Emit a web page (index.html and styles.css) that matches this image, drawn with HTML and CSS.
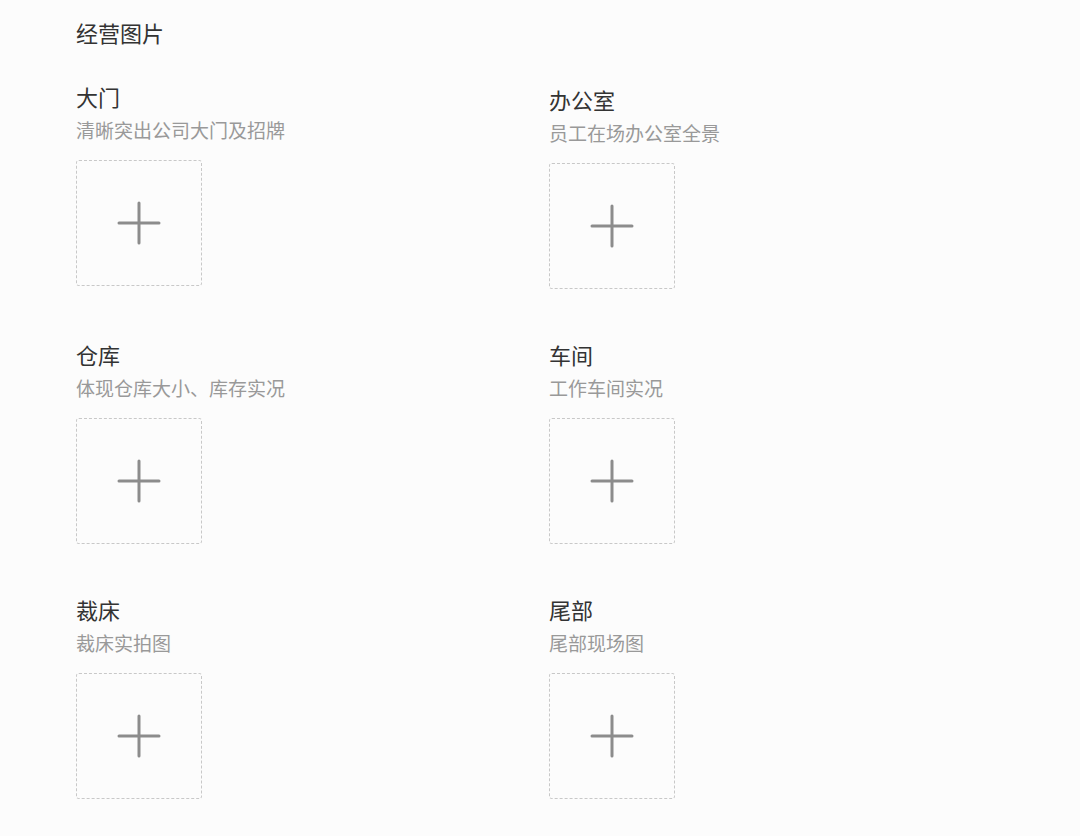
FILE: index.html
```html
<!DOCTYPE html>
<html>

<head>
  <title>经营图片</title>
  <link rel="stylesheet" href="styles.css">
</head>

<body>
  <div class="container">
    <h1>经营图片</h1>

    <div class="photo-grid">
      <div class="photo-item">
        <div class="photo-name">大门</div>
        <div class="photo-desc">清晰突出公司大门及招牌</div>
        <div class="upload-box">
          <svg width="44" height="44" viewBox="0 0 44 44"><path d="M22 2v40M2 22h40" /></svg>
        </div>
      </div>

      <div class="photo-item shifted">
        <div class="photo-name">办公室</div>
        <div class="photo-desc">员工在场办公室全景</div>
        <div class="upload-box">
          <svg width="44" height="44" viewBox="0 0 44 44"><path d="M22 2v40M2 22h40" /></svg>
        </div>
      </div>

      <div class="photo-item">
        <div class="photo-name">仓库</div>
        <div class="photo-desc">体现仓库大小、库存实况</div>
        <div class="upload-box">
          <svg width="44" height="44" viewBox="0 0 44 44"><path d="M22 2v40M2 22h40" /></svg>
        </div>
      </div>

      <div class="photo-item">
        <div class="photo-name">车间</div>
        <div class="photo-desc">工作车间实况</div>
        <div class="upload-box">
          <svg width="44" height="44" viewBox="0 0 44 44"><path d="M22 2v40M2 22h40" /></svg>
        </div>
      </div>

      <div class="photo-item">
        <div class="photo-name">裁床</div>
        <div class="photo-desc">裁床实拍图</div>
        <div class="upload-box">
          <svg width="44" height="44" viewBox="0 0 44 44"><path d="M22 2v40M2 22h40" /></svg>
        </div>
      </div>

      <div class="photo-item">
        <div class="photo-name">尾部</div>
        <div class="photo-desc">尾部现场图</div>
        <div class="upload-box">
          <svg width="44" height="44" viewBox="0 0 44 44"><path d="M22 2v40M2 22h40" /></svg>
        </div>
      </div>
    </div>
  </div>
</body>

</html>
```

FILE: styles.css
```css
/* Global styles */
body {
  font-family: 'Noto Sans CJK SC', 'Noto Sans', sans-serif;
  margin: 0;
  background-color: #fcfcfc;
}

.container {
  padding: 17px 0 0 76px;
}

/* Heading */
h1 {
  margin: 0 0 34px;
  font-size: 22px;
  font-weight: normal;
  line-height: 30px;
  color: #333333;
}

/* Photo grid */
.photo-grid {
  display: grid;
  grid-template-columns: 473px 473px;
  row-gap: 50px;
}

.photo-item {
  display: flex;
  flex-direction: column;
  align-items: flex-start;
}

.photo-item.shifted {
  padding-top: 3px;
}

.photo-name {
  font-size: 22px;
  line-height: 30px;
  color: #333333;
}

.photo-desc {
  margin-top: 6px;
  font-size: 19px;
  line-height: 26px;
  color: #999999;
}

.upload-box {
  display: flex;
  align-items: center;
  justify-content: center;
  box-sizing: border-box;
  width: 126px;
  height: 126px;
  margin-top: 17px;
  border: 1px dashed #c8c8c8;
  border-radius: 3px;
  background-color: #fcfcfc;
  cursor: pointer;
}

.upload-box svg path {
  fill: none;
  stroke: #8c8c8c;
  stroke-width: 3;
  stroke-linecap: round;
}
```
